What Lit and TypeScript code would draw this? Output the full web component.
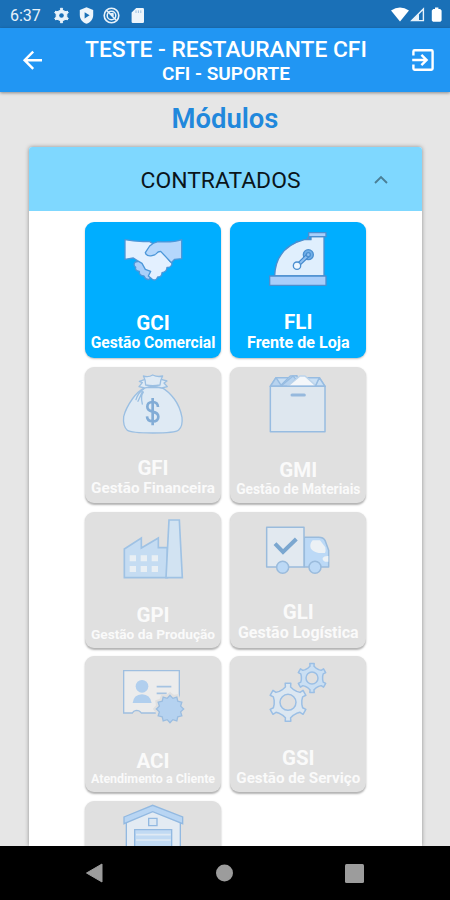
import { LitElement, html, svg, css, nothing, type SVGTemplateResult } from "lit";
import { customElement, property } from "lit/decorators.js";

const gearPath = (cx: number, cy: number, r: number, teeth: number): string => {
  const pts: string[] = [];
  const step = (Math.PI * 2) / teeth;
  const profile: [number, number][] = [
    [-0.36, 0.7], [-0.16, 0.78], [-0.14, 0.96], [0.14, 0.96], [0.16, 0.78], [0.36, 0.7],
  ];
  for (let i = 0; i < teeth; i++) {
    for (const [a, k] of profile) {
      const t = -Math.PI / 2 + (i + a) * step;
      pts.push(`${(cx + Math.cos(t) * r * k).toFixed(1)} ${(cy + Math.sin(t) * r * k).toFixed(1)}`);
    }
  }
  return `M${pts.join("L")}Z`;
};

const sealPath = (cx: number, cy: number, outer: number, inner: number, n: number): string => {
  const pts: string[] = [];
  for (let i = 0; i < n * 2; i++) {
    const r = i % 2 ? inner : outer;
    const t = -Math.PI / 2 + (i * Math.PI) / n;
    pts.push(`${(cx + Math.cos(t) * r).toFixed(1)} ${(cy + Math.sin(t) * r).toFixed(1)}`);
  }
  return `M${pts.join("L")}Z`;
};

const icons: Record<string, SVGTemplateResult> = {
  handshake: svg`
    <g stroke="#4c97d9" stroke-width="4" stroke-linejoin="round">
      <path fill="#a9cffa" d="M166 138Q158 146 167 154Q164 164 178 166Q177 180 192 180Q197 193 208 190L222 170L186 134Z"/>
      <path fill="#e3f0ff" d="M135 71Q165 78 208 76L240 96L270 136Q279 142 274 149Q269 156 261 154Q261 168 246 170Q246 183 233 183Q229 196 217 190L205 180L212 166L196 160L186 142L172 134L160 126L135 130Z"/>
      <path fill="#b5d7fc" d="M305 71Q280 80 234 77Q219 80 209 90L196 110Q200 122 216 119Q228 117 234 108L242 106L274 140L284 130L305 128Z"/>
    </g>`,
  register: svg`
    <g stroke="#4b8fd0" stroke-width="4" stroke-linejoin="round">
      <path stroke-width="8" stroke-linecap="round" d="M216 78L219 82M186 98L190 102M167 124L172 127M154 153L159 155M249 70V66"/>
      <path fill="#e0effd" d="M149 180Q152 94 238 71L258 71V62H297V180Z"/>
      <path fill="#a9d0fb" d="M251 50H303V62H251Z"/>
      <path fill="#a9cefa" d="M134 180H303V208H134Z"/>
      <circle cx="250" cy="116" r="15" fill="#71afe8"/>
      <path stroke="#4388cc" stroke-width="13" d="M249 118L222 144"/>
      <path stroke="#8fc0f2" stroke-width="6" d="M249 118L222 144"/>
      <circle cx="250" cy="116" r="6" fill="#8fc0f2"/>
      <circle cx="216" cy="149" r="11" fill="#eef7ff"/>
    </g>`,
  bag: svg`
    <g stroke="#9bbfe2" stroke-width="4" stroke-linejoin="round" stroke-linecap="round">
      <path fill="#dfeaf4" d="M195 75Q174 85 157 109Q137 137 131 162Q128 190 142 203Q153 211 218 211Q286 211 296 202Q309 190 306 164Q300 132 283 109Q265 85 244 74Z"/>
      <path fill="#dfeaf4" d="M193 51L178 56L187 60L177 72L194 76Q218 67 245 76L262 72L252 61L261 55L246 51Z"/>
      <path fill="#dfeaf4" d="M190 40Q205 45 218 37Q233 44 248 40Q240 53 240 67Q218 71 197 67Q197 51 190 40Z"/>
      <path fill="none" d="M192 78Q174 90 168 111M187 87L174 116M190 88Q181 100 187 124"/>
    </g>
    <path fill="none" stroke="#82acd6" stroke-width="8" d="M234 133Q233 118 218 118Q202 118 202 132Q202 143 218 147Q235 151 235 162Q235 176 218 176Q202 176 201 161M218 106V188"/>`,
  box: svg`
    <g stroke="#97bce1" stroke-width="4.5" stroke-linejoin="round">
      <path fill="#c9dff4" d="M136 71L153 45H283L300 71Z"/>
      <path fill="#eef3f8" d="M165 71L196 40L216 39L219 71Z"/>
      <path fill="#b7d3ef" d="M136 71L153 45L169 69L204 40L213 49L190 71Z"/>
      <path fill="#f4f7fa" stroke="#bcd4eb" d="M187 71L225 40H240L275 71Z"/>
      <path fill="#c9dff4" d="M283 45L300 71H271Z"/>
      <path fill="#dee7ef" d="M136 71H300V207H136Z"/>
      <path stroke="#96b9dd" stroke-width="9" stroke-linecap="round" d="M201 97H238"/>
    </g>`,
  factory: svg`
    <g stroke="#9fc2e4" stroke-width="5" stroke-linejoin="miter">
      <path fill="#c5dcf2" d="M133 210V124L184 91V121L235 91V120H262V210Z"/>
      <path fill="#d2e3f2" d="M258 210L267 37H298L307 210Z"/>
    </g>
    <path fill="#e9eff4" d="M149 143h19v18h-19zM182 143h19v18h-19zM215 143h19v18h-19zM149 175h19v18h-19zM182 175h19v18h-19zM215 175h19v18h-19z"/>`,
  truck: svg`
    <g stroke="#9abbdc" stroke-width="4.5" stroke-linejoin="round">
      <path fill="#bcd9f6" d="M238 89H281Q295 89 300 98L311 128V178H238Z"/>
      <path fill="#e2e9f0" d="M125 59H237V178H125Z"/>
      <path fill="#ecf1f5" stroke="none" d="M263 98H285L301 119Q303 130 300 136H281Q264 133 257 122Q253 108 263 98ZM310 145Q297 144 293 151Q292 159 300 162H310Z"/>
      <circle cx="173" cy="179" r="18" fill="#bcd9f6"/>
      <circle cx="270" cy="179" r="18" fill="#bcd9f6"/>
    </g>
    <path fill="none" stroke="#7ba7d0" stroke-width="12" d="M150 108L174 133L214 94"/>`,
  certificate: svg`
    <path fill="#ececec" stroke="#9fbfe0" stroke-width="4" d="M131 57H298V184H184Q179 176 169 176Q160 177 157 184H131Z"/>
    <circle cx="186" cy="104" r="19" fill="#b1cfee"/>
    <path fill="#b1cfee" d="M158 154Q161 129 186 128Q211 129 215 154Z"/>
    <path stroke="#a5c3e2" stroke-width="5" d="M230 105H274M230 125H260"/>
    <path fill="none" stroke="#e0e0e0" stroke-width="18" d="${sealPath(270, 172, 40, 34, 12)}"/>
    <path fill="#b5d2f0" stroke="#9bbde0" stroke-width="4" d="${sealPath(270, 172, 41, 33, 12)}"/>`,
  gears: svg`
    <g fill="#dce7f1" stroke="#9bbfe5" stroke-width="4.5" stroke-linejoin="round">
      <path d="${gearPath(189, 152, 60, 6)}"/>
      <circle cx="189" cy="152" r="24" fill="#e0e0e0"/>
      <path fill="#cadff3" d="${gearPath(261, 79, 46, 6)}"/>
      <circle cx="261" cy="79" r="18" fill="#e0e0e0"/>
    </g>`,
  warehouse: svg`
    <g stroke="#92b9e1" stroke-width="4" stroke-linejoin="miter">
      <path fill="#e3ebf3" d="M139 72L218 40L301 72V210H139Z"/>
      <path fill="#b8d5f3" d="M132 61L218 26L308 61V81L218 45L132 81Z"/>
      <path fill="#dce8f3" d="M206 65H231V87H206Z"/>
      <path fill="#c1daf3" d="M164 99H275V210H164Z"/>
      <path stroke="#e0eaf4" stroke-width="5" d="M168 114H272M168 130H272"/>
    </g>`,
};

interface Modulo {
  icon: string;
  code?: string;
  name?: string;
  size?: number;
  active?: boolean;
}

const modulos: Modulo[] = [
  { code: "GCI", name: "Gestão Comercial", icon: "handshake", size: 15.6, active: true },
  { code: "FLI", name: "Frente de Loja", icon: "register", size: 16.1, active: true },
  { code: "GFI", name: "Gestão Financeira", icon: "bag", size: 15.3 },
  { code: "GMI", name: "Gestão de Materiais", icon: "box", size: 13.8 },
  { code: "GPI", name: "Gestão da Produção", icon: "factory", size: 13.7 },
  { code: "GLI", name: "Gestão Logística", icon: "truck", size: 16 },
  { code: "ACI", name: "Atendimento a Cliente", icon: "certificate", size: 12.45 },
  { code: "GSI", name: "Gestão de Serviço", icon: "gears", size: 15.2 },
  { icon: "warehouse" },
];

@customElement("module-tile")
class ModuleTile extends LitElement {
  @property({ attribute: false }) item!: Modulo;

  static styles = css`
    :host { display: block; }
    .tile {
      height: 136px; border-radius: 9px; background: #e0e0e0; color: #fafafa;
      display: flex; flex-direction: column; align-items: center; overflow: hidden;
      box-shadow: 0 1.5px 2px rgba(0,0,0,.3); font-weight: 700;
    }
    .active { background: #00aeff; color: #fff; box-shadow: 0 1px 2px rgba(0,0,0,.25); }
    .art { display: block; width: 136px; height: 85px; flex: none; }
    .labels { flex: 1; display: flex; flex-direction: column; justify-content: flex-end; align-items: center; padding-bottom: 5.5px; }
    .code { font-size: 20.5px; line-height: 22px; }
    .name { line-height: 1.2; white-space: nowrap; }
  `;

  render() {
    const m = this.item;
    return html`<div class="tile ${m.active ? "active" : ""}">
      <svg class="art" viewBox="15 ${m.active ? 18 : 13} 408 255" fill="none">${icons[m.icon]}</svg>
      ${m.code
        ? html`<div class="labels">
            <div class="code">${m.code}</div>
            <div class="name" style="font-size:${m.size}px">${m.name}</div>
          </div>`
        : nothing}
    </div>`;
  }
}

@customElement("app-root")
class AppRoot extends LitElement {
  static styles = css`
    :host {
      display: flex; flex-direction: column; height: 900px; width: 450px; overflow: hidden;
      background: #e6e6e6; font-family: Roboto, "Liberation Sans", sans-serif;
    }
    svg { display: block; flex: none; }
    .status {
      height: 28px; flex: none; background: #1a70b7; color: #e8f2fa; box-sizing: border-box;
      display: flex; align-items: center; padding: 2px 7px 0 10px; font-size: 16px;
    }
    .clock { width: 43px; }
    .left { display: flex; gap: 8px; flex: 1; }
    .right { display: flex; gap: 1px; }
    .bar {
      height: 64px; flex: none; background: #2196f3; color: #fff; z-index: 1; box-sizing: border-box;
      display: flex; align-items: center; justify-content: space-between; padding: 0 14px 0 20px;
      box-shadow: 0 1px 3px rgba(0,0,0,.4);
    }
    .titles { text-align: center; white-space: nowrap; padding-right: 2px; }
    .title { font-size: 22.8px; line-height: 27px; font-weight: 500; padding-top: 1px; }
    .subtitle { font-size: 19px; line-height: 22px; font-weight: 600; }
    .heading {
      margin: 0; height: 55px; flex: none; line-height: 55px; text-align: center;
      font-size: 27.4px; font-weight: 600; color: #2188dc;
    }
    .panel {
      margin: 0 28px 0 29px; flex: 1; min-height: 0; background: #fff; overflow: hidden;
      border-radius: 3px 3px 0 0; box-shadow: 0 0 4px rgba(0,0,0,.38);
    }
    .section {
      height: 64px; background: #7fd8ff; display: flex; align-items: center; color: #0b151b;
      padding: 2px 34px 0 38px; box-sizing: border-box; font-size: 22.9px;
    }
    .label { flex: 1; text-align: center; }
    .grid { display: grid; grid-template-columns: 136px 136px; gap: 8.8px 9.3px; padding: 11px 0 0 56px; }
    .nav {
      height: 54px; flex: none; background: #000; z-index: 1;
      display: flex; align-items: center; justify-content: space-between; padding: 0 86px 0 85px;
    }
  `;

  render() {
    return html`
      <div class="status">
        <div class="clock">6:37</div>
        <div class="left">
          <svg width="17" height="17" viewBox="0 0 17 17">
            <path d="${gearPath(8.5, 8.5, 7.6, 6)}" fill="#e8f2fa" stroke="#e8f2fa" stroke-width="1" stroke-linejoin="round"/>
            <circle cx="8.5" cy="8.5" r="2.3" fill="#1a70b7"/>
          </svg>
          <svg width="17" height="17" viewBox="0 0 17 17">
            <path d="M8.5 0.3L15.2 3V8C15.2 12 12.5 15.6 8.5 16.8C4.5 15.6 1.8 12 1.8 8V3Z" fill="#eef5fb"/>
            <path d="M6.6 5.2L11.6 8.3L6.6 11.4Z" fill="#1a70b7"/>
          </svg>
          <svg width="17" height="17" viewBox="0 0 17 17" fill="none" stroke="#e8f2fa">
            <circle cx="8.5" cy="8.5" r="7.3" stroke-width="1.6"/>
            <circle cx="8.5" cy="8.5" r="4.3" stroke-width="1.5"/>
            <path stroke-width="1.6" d="M4 3.8L13 13M7 7L9.8 6.6L10 9.6"/>
          </svg>
          <svg width="19" height="17" viewBox="0 0 19 17">
            <path d="M8.2 1H14.8Q16 1 16 2.2V14.8Q16 16 14.8 16H4.8Q3.6 16 3.6 14.8V5.4Z" fill="#eef5fb"/>
            <path d="M8 3.4V6M10.4 3.4V6M12.8 3.4V6" stroke="#9dc0df" stroke-width="1"/>
          </svg>
        </div>
        <div class="right">
          <svg width="18" height="16" viewBox="0 0 18 16"><path d="M0 3.4Q9-2.6 18 3.4L9 14.6Z" fill="#fff"/></svg>
          <svg width="16" height="16" viewBox="0 0 16 16">
            <path d="M1.8 13.6L13.4 2V13.6Z" fill="none" stroke="#e8f2fa" stroke-width="1.4"/>
            <path d="M1.8 13.6L9 6.4V13.6Z" fill="#e8f2fa"/>
          </svg>
          <svg width="16" height="16" viewBox="0 0 16 16"><path d="M6.2 2H8V0.4H11.4V2H13.2L14.6 3.4V13.6L13.4 14.8H6L4.8 13.6V3.4Z" fill="#fff"/></svg>
        </div>
      </div>
      <div class="bar">
        <svg width="24" height="24" viewBox="0 0 24 24" fill="none" stroke="#fff" stroke-width="2.4">
          <path d="M22 12.2H5M13.2 3.6L4.6 12.2L13.2 20.8"/>
        </svg>
        <div class="titles">
          <div class="title">TESTE - RESTAURANTE CFI</div>
          <div class="subtitle">CFI - SUPORTE</div>
        </div>
        <svg width="26" height="26" viewBox="0 0 26 26" fill="none" stroke="#fff" stroke-width="2.4">
          <path d="M3.4 8.6V4.4Q3.4 3.2 4.6 3.2H21.4Q22.6 3.2 22.6 4.4V21.6Q22.6 22.8 21.4 22.8H4.6Q3.4 22.8 3.4 21.6V17.4"/>
          <path d="M2.2 13H16M11.4 7.8L16.6 13L11.4 18.2"/>
        </svg>
      </div>
      <h1 class="heading">Módulos</h1>
      <div class="panel">
        <div class="section">
          <div class="label">CONTRATADOS</div>
          <svg width="14" height="10" viewBox="0 0 14 10" fill="none" stroke="#4b7f96" stroke-width="1.9"><path d="M1 8L7 2L13 8"/></svg>
        </div>
        <div class="grid">${modulos.map((m) => html`<module-tile .item=${m}></module-tile>`)}</div>
      </div>
      <div class="nav">
        <svg width="18" height="20" viewBox="0 0 18 20"><path d="M1.5 10L17 1V19Z" fill="#9c9c9c" stroke="#9c9c9c" stroke-linejoin="round"/></svg>
        <svg width="18" height="18" viewBox="0 0 18 18"><circle cx="9.5" cy="9" r="8.5" fill="#9c9c9c"/></svg>
        <svg width="19" height="19" viewBox="0 0 19 19"><rect width="19" height="19" rx="1.5" fill="#9c9c9c"/></svg>
      </div>
    `;
  }
}
